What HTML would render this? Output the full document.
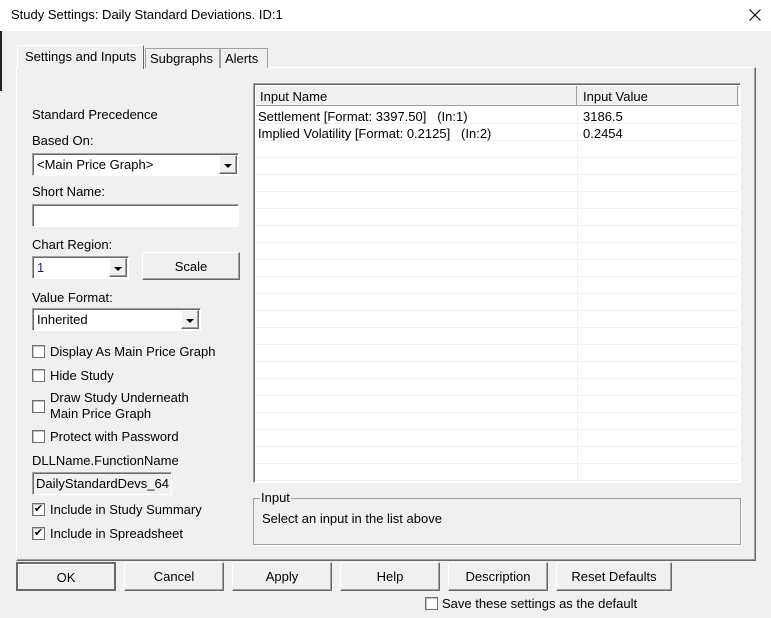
<!DOCTYPE html>
<html><head><style>
*{margin:0;padding:0;box-sizing:border-box}
body{width:771px;height:618px;background:#f0f0f0;font-family:"Liberation Sans",Arial,sans-serif;font-size:13px;color:#000;position:relative;overflow:hidden}
.a{position:absolute;white-space:nowrap}
.title{left:0;top:0;width:771px;height:31px;background:#fff}
.sunk{background:#fff;border:1px solid;border-color:#a0a0a0 #fff #fff #a0a0a0;box-shadow:inset 1px 1px 0 #696969}
.btn{background:#f0f0f0;border:1px solid;border-color:#fff #696969 #696969 #fff;box-shadow:inset -1px -1px 0 #a0a0a0;text-align:center}
.dd{position:absolute;right:1px;top:1px;width:18px;bottom:1px;background:#f0f0f0;border:1px solid;border-color:#fff #696969 #696969 #fff;box-shadow:inset -1px -1px 0 #a0a0a0}
.dd:after{content:"";position:absolute;left:4px;top:8px;border-left:4px solid transparent;border-right:4px solid transparent;border-top:4px solid #000}
.cb{width:13px;height:13px;background:#fff;border:1px solid #6f6f6f;box-shadow:inset 1px 1px 0 #c0c0c0}
.tab{border:1px solid #a0a0a0;border-bottom:none;background:#f0f0f0;padding:0 4px}
.row{position:absolute;left:2px;right:2px;height:17px;border-bottom:1px solid #f0f0f0}
</style></head><body>
<div class="a title"></div>
<div class="a" style="left:11px;top:7px;font-size:13px">Study Settings: Daily Standard Deviations. ID:1</div>
<svg class="a" style="left:749px;top:9px" width="12" height="12"><path d="M0.5 0.5L11.5 11.5M11.5 0.5L0.5 11.5" stroke="#000" stroke-width="1.1"/></svg>
<div class="a" style="left:0;top:31px;width:2px;height:60px;background:#222"></div>

<div class="a" style="left:16px;top:67px;width:740px;height:494px;border:1px solid;border-color:#fff #696969 #696969 #fff;box-shadow:inset -1px -1px 0 #a0a0a0"></div>
<div class="a tab" style="left:145px;top:48px;width:75px;height:20px;padding-top:2px">Subgraphs</div>
<div class="a tab" style="left:220px;top:48px;width:48px;height:20px;padding-top:2px">Alerts</div>
<div class="a" style="left:17px;top:45px;width:127px;height:24px;background:#f0f0f0;border:1px solid #fff;border-right-color:#696969;border-bottom:none;padding:3px 0 0 7px">Settings and Inputs</div>

<div class="a" style="left:32px;top:107px">Standard Precedence</div>
<div class="a" style="left:32px;top:133px">Based On:</div>
<div class="a sunk" style="left:32px;top:153px;width:207px;height:23px"><span class="a" style="left:4px;top:3px">&lt;Main Price Graph&gt;</span><div class="dd"></div></div>
<div class="a" style="left:32px;top:184px">Short Name:</div>
<div class="a sunk" style="left:32px;top:204px;width:207px;height:23px"></div>
<div class="a" style="left:32px;top:237px">Chart Region:</div>
<div class="a sunk" style="left:32px;top:256px;width:97px;height:23px"><span class="a" style="left:4px;top:3px;color:#1a1a80">1</span><div class="dd"></div></div>
<div class="a btn" style="left:142px;top:252px;width:98px;height:28px;padding-top:6px">Scale</div>
<div class="a" style="left:32px;top:290px">Value Format:</div>
<div class="a sunk" style="left:32px;top:308px;width:169px;height:23px"><span class="a" style="left:4px;top:3px">Inherited</span><div class="dd"></div></div>
<div class="a cb" style="left:32px;top:345px"></div><div class="a" style="left:50px;top:344px">Display As Main Price Graph</div>
<div class="a cb" style="left:32px;top:369px"></div><div class="a" style="left:50px;top:368px">Hide Study</div>
<div class="a cb" style="left:32px;top:400px"></div><div class="a" style="left:50px;top:390px;line-height:16px">Draw Study Underneath<br>Main Price Graph</div>
<div class="a cb" style="left:32px;top:430px"></div><div class="a" style="left:50px;top:429px">Protect with Password</div>
<div class="a" style="left:32px;top:453px">DLLName.FunctionName</div>
<div class="a" style="left:32px;top:472px;width:140px;height:23px;border:1px solid;border-color:#a0a0a0 #fff #fff #a0a0a0;box-shadow:inset 1px 1px 0 #696969;overflow:hidden"><span class="a" style="left:3px;top:3px">DailyStandardDevs_64</span></div>
<div class="a cb" style="left:32px;top:503px;font-size:11px;line-height:11px;text-align:center">&#10004;</div><div class="a" style="left:50px;top:502px">Include in Study Summary</div>
<div class="a cb" style="left:32px;top:527px;font-size:11px;line-height:11px;text-align:center">&#10004;</div><div class="a" style="left:50px;top:526px">Include in Spreadsheet</div>

<div class="a sunk" style="left:253px;top:83px;width:488px;height:400px;overflow:hidden">
 <div class="a" style="left:2px;top:2px;width:483px;height:20px;background:#f0f0f0;border-bottom:1px solid #a0a0a0"></div>
 <div class="a" style="left:2px;top:2px;width:321px;height:20px;border-right:1px solid #a0a0a0"></div>
 <div class="a" style="left:483px;top:2px;width:1px;height:20px;background:#a0a0a0"></div>
 <div class="a" style="left:6px;top:5px">Input Name</div>
 <div class="a" style="left:329px;top:5px">Input Value</div>
 <div class="a" style="left:323px;top:22px;width:1px;height:380px;background:#f0f0f0"></div>
 <div class="row" style="top:23px"></div><div class="row" style="top:40px"></div><div class="row" style="top:57px"></div><div class="row" style="top:74px"></div><div class="row" style="top:91px"></div><div class="row" style="top:108px"></div><div class="row" style="top:125px"></div><div class="row" style="top:142px"></div><div class="row" style="top:159px"></div><div class="row" style="top:176px"></div><div class="row" style="top:193px"></div><div class="row" style="top:210px"></div><div class="row" style="top:227px"></div><div class="row" style="top:244px"></div><div class="row" style="top:261px"></div><div class="row" style="top:278px"></div><div class="row" style="top:295px"></div><div class="row" style="top:312px"></div><div class="row" style="top:329px"></div><div class="row" style="top:346px"></div><div class="row" style="top:363px"></div><div class="row" style="top:380px"></div>
 <div class="a" style="left:4px;top:25px">Settlement [Format: 3397.50] &nbsp; (In:1)</div>
 <div class="a" style="left:329px;top:25px">3186.5</div>
 <div class="a" style="left:4px;top:42px">Implied Volatility [Format: 0.2125] &nbsp; (In:2)</div>
 <div class="a" style="left:329px;top:42px">0.2454</div>
</div>

<div class="a" style="left:253px;top:498px;width:488px;height:47px;border:1px solid #a0a0a0;box-shadow:1px 1px 0 #fff"></div>
<div class="a" style="left:260px;top:490px;background:#f0f0f0;padding:0 1px">Input</div>
<div class="a" style="left:262px;top:511px">Select an input in the list above</div>

<div class="a btn" style="left:16px;top:562px;width:100px;height:29px;padding-top:6px;border:2px solid #696969;box-shadow:inset 1px 1px 0 #fff">OK</div>
<div class="a btn" style="left:124px;top:562px;width:100px;height:29px;padding-top:6px">Cancel</div>
<div class="a btn" style="left:232px;top:562px;width:100px;height:29px;padding-top:6px">Apply</div>
<div class="a btn" style="left:340px;top:562px;width:100px;height:29px;padding-top:6px">Help</div>
<div class="a btn" style="left:448px;top:562px;width:100px;height:29px;padding-top:6px">Description</div>
<div class="a btn" style="left:556px;top:562px;width:116px;height:29px;padding-top:6px">Reset Defaults</div>
<div class="a cb" style="left:425px;top:597px"></div><div class="a" style="left:442px;top:596px">Save these settings as the default</div>
</body></html>
